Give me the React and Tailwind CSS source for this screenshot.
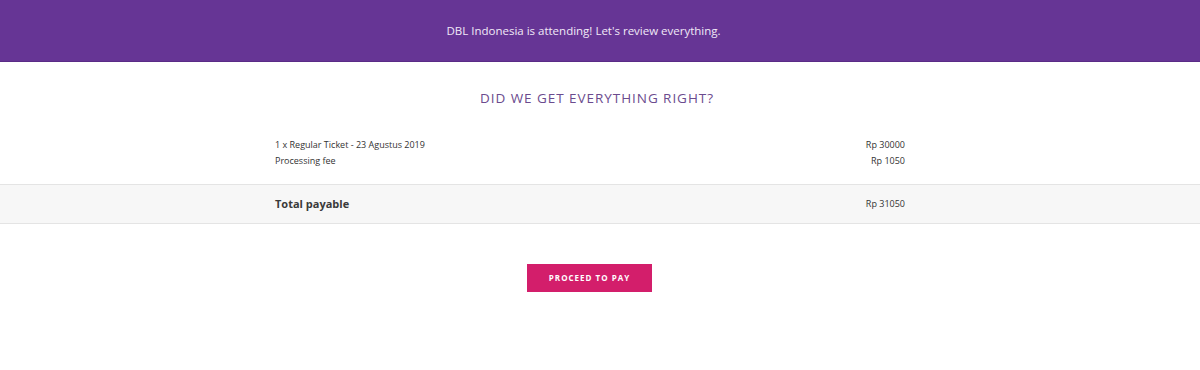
export default function App() {
  const font = { fontFamily: '"Open Sans", sans-serif' };
  return (
    <div className="w-[1200px] h-[370px] bg-white" style={font}>
      <div className="h-[62px] bg-[#663595] border-b border-[#5a2b86] flex items-center justify-center pr-[33px]">
        <span className="text-[11.5px] text-[#f1e9f7]">DBL Indonesia is attending! Let's review everything.</span>
      </div>
      <div>
        <div className="pt-[28px] pr-[6px] text-center text-[13.5px] tracking-[0.95px] text-[#6b4b8e] leading-[16px]">
          DID WE GET EVERYTHING RIGHT?
        </div>
        <div className="pr-5">
          <div className="w-[630px] mx-auto mt-[31px] text-[9px] text-[#333] leading-[16px]">
            <div className="flex justify-between">
              <span>1 x Regular Ticket - 23 Agustus 2019</span>
              <span>Rp 30000</span>
            </div>
            <div className="flex justify-between">
              <span>Processing fee</span>
              <span>Rp 1050</span>
            </div>
          </div>
        </div>
      </div>
      <div className="mt-[15px] h-[40px] bg-[#f7f7f7] border-y border-[#e4e4e4] pr-5">
        <div className="w-[630px] mx-auto h-full flex items-center justify-between">
          <span className="text-[11px] font-bold text-[#3a3a3a]">Total payable</span>
          <span className="text-[9px] text-[#333]">Rp 31050</span>
        </div>
      </div>
      <div className="pr-[21px] flex justify-center pt-[40px]">
        <button className="w-[125px] h-[28px] bg-[#d31e6b] text-white text-[8px] font-bold tracking-[1px]">
          PROCEED TO PAY
        </button>
      </div>
    </div>
  );
}
